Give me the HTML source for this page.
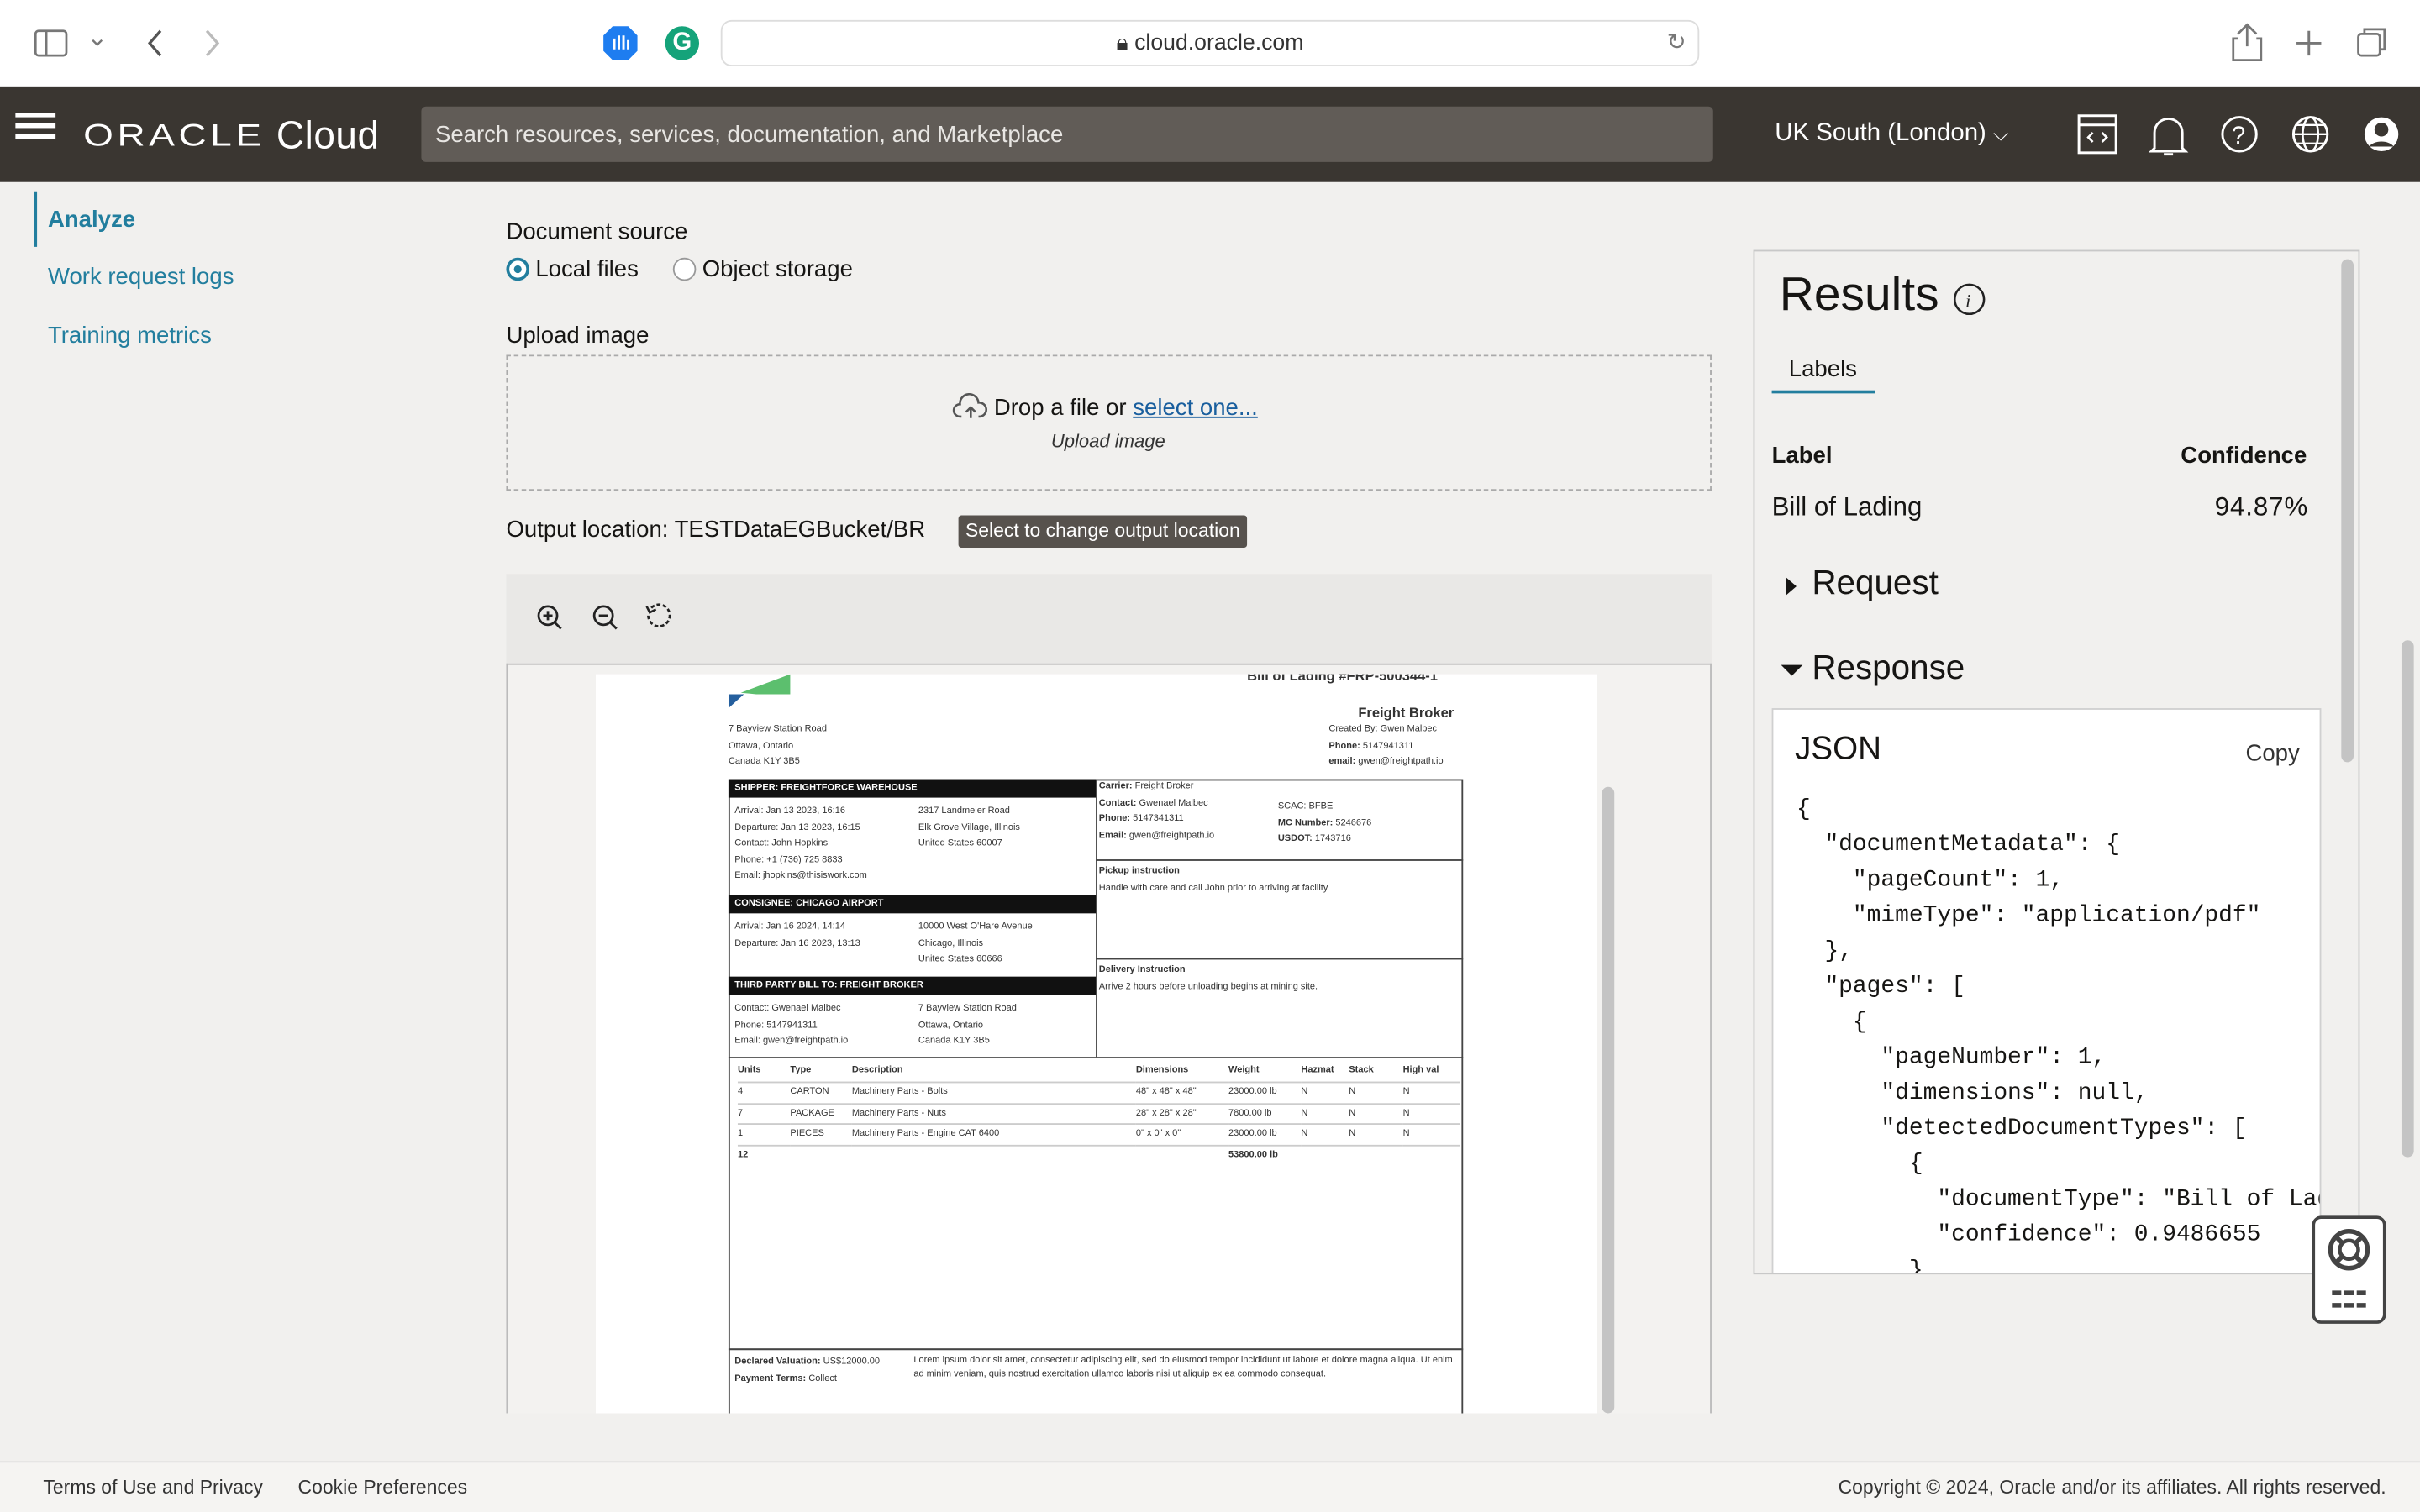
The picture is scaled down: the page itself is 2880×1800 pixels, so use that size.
<!DOCTYPE html>
<html><head><meta charset="utf-8"><style>
*{margin:0;padding:0;box-sizing:border-box}
body{width:2880px;height:1800px;overflow:hidden;background:#f1f0ee;font-family:"Liberation Sans",sans-serif}
#w{position:absolute;left:0;top:0;width:1568px;height:980px;transform:scale(1.836735);transform-origin:0 0;background:#f1f0ee;color:#161513}
.a{position:absolute}
.doc div{position:absolute}
.doc{font-size:6px;color:#333;line-height:10.5px}
.bar{background:#111;color:#fff;font-weight:bold;font-size:6px;padding-left:4px;line-height:12px}
.mono{font-family:"Liberation Mono",monospace;font-size:15.2px;line-height:23px;white-space:pre;color:#161513}
.doc table{border-collapse:collapse;font-size:6px;color:#333}
.doc td{height:13.5px;border-bottom:1px solid #ccc;padding:0}
</style></head><body><div id="w">
<div class="a" style="left:0;top:0;width:1568px;height:56px;background:#fff"></div>
<svg class="a" style="left:20px;top:18px" width="60" height="20"><rect x="3" y="2" width="20" height="16" rx="2" fill="none" stroke="#777" stroke-width="1.5"/><line x1="10" y1="2" x2="10" y2="18" stroke="#777" stroke-width="1.5"/><path d="M40 8l3 3 3-3" fill="none" stroke="#777" stroke-width="1.3"/></svg>
<svg class="a" style="left:90px;top:17px" width="60" height="22"><path d="M14 3l-7 8 7 8" fill="none" stroke="#555" stroke-width="1.8"/><path d="M44 3l7 8-7 8" fill="none" stroke="#bbb" stroke-width="1.8"/></svg>
<svg class="a" style="left:390px;top:16px" width="24" height="24"><path d="M7 1h10l6 6v10l-6 6H7l-6-6V7z" fill="#1e7df0"/><path d="M8 16V9m3 7V7m3 9V7m3 9v-6" stroke="#fff" stroke-width="1.6"/></svg>
<div class="a" style="left:431px;top:17px;width:22px;height:22px;border-radius:50%;background:#15a37a;color:#fff;font-weight:bold;font-size:16px;text-align:center;line-height:22px">G</div>
<div class="a" style="left:467px;top:13px;width:634px;height:30px;border:1px solid #ddd;border-radius:7px;background:#fff;font-size:14.5px;color:#333;text-align:center;line-height:29px">🔒︎ cloud.oracle.com</div>
<div class="a" style="left:1080px;top:18px;font-size:15px;color:#777">↻</div>
<svg class="a" style="left:1440px;top:14px" width="110" height="28"><path d="M10 8l6-6 6 6M16 2v14M10 11H7v14h18V11h-3" fill="none" stroke="#777" stroke-width="1.5"/><path d="M56 6v16M48 14h16" stroke="#777" stroke-width="1.6"/><rect x="88" y="8" width="14" height="14" rx="2" fill="none" stroke="#777" stroke-width="1.5"/><path d="M92 8V5h13v13h-3" fill="none" stroke="#777" stroke-width="1.5"/></svg>
<div class="a" style="left:0;top:56px;width:1568px;height:62px;background:#3a3631"></div>
<div class="a" style="left:10px;top:87px;width:26px;height:3px;background:#fff;box-shadow:0 -7px 0 #fff,0 7px 0 #fff;transform:translateY(-7px)"></div>
<div class="a" style="left:54px;top:74px;font-size:25px;color:#fff;white-space:nowrap"><span style="letter-spacing:2.5px;font-weight:normal;transform:scaleY(0.8);display:inline-block">ORACLE</span><span style="font-weight:normal;letter-spacing:0.3px"> Cloud</span></div>
<div class="a" style="left:273px;top:69px;width:837px;height:36px;background:#615c57;border-radius:3px;color:#e8e6e3;font-size:15px;line-height:37px;padding-left:9px">Search resources, services, documentation, and Marketplace</div>
<div class="a" style="left:1150px;top:78px;color:#fff;font-size:16px">UK South (London) <span style="font-size:13px">⌵</span></div>
<svg class="a" style="left:1345px;top:72px" width="215" height="32"><rect x="2" y="3" width="24" height="24" fill="none" stroke="#fff" stroke-width="1.6"/><line x1="2" y1="9" x2="26" y2="9" stroke="#fff" stroke-width="1.6"/><path d="M11 14l-3 3 3 3M17 14l3 3-3 3" fill="none" stroke="#fff" stroke-width="1.4"/><path d="M51 24V14a9 9 0 0 1 18 0v10l2 2H49zM57 28h6" fill="none" stroke="#fff" stroke-width="1.6"/><circle cx="106" cy="15" r="11" fill="none" stroke="#fff" stroke-width="1.6"/><text x="101" y="21" fill="#fff" font-size="16" font-family="Liberation Sans">?</text><circle cx="152" cy="15" r="11" fill="none" stroke="#fff" stroke-width="1.6"/><ellipse cx="152" cy="15" rx="5" ry="11" fill="none" stroke="#fff" stroke-width="1.4"/><path d="M141 15h22M143 9h18M143 21h18" stroke="#fff" stroke-width="1.3"/><circle cx="198" cy="15" r="11" fill="#fff"/><circle cx="198" cy="12" r="4.5" fill="#3a3631"/><path d="M190 23a9 6 0 0 1 16 0" fill="#3a3631"/></svg>
<div class="a" style="left:22px;top:124px;width:2px;height:36px;background:#227e9e"></div>
<div class="a" style="left:31px;top:134px;font-size:15px;color:#227e9e;font-weight:bold">Analyze</div>
<div class="a" style="left:31px;top:171px;font-size:15px;color:#227e9e">Work request logs</div>
<div class="a" style="left:31px;top:209px;font-size:15px;color:#227e9e">Training metrics</div>
<div class="a" style="left:328px;top:142px;font-size:15px">Document source</div>
<div class="a" style="left:328px;top:167px;width:15px;height:15px;border-radius:50%;background:#227e9e"></div>
<div class="a" style="left:330px;top:169px;width:11px;height:11px;border-radius:50%;border:3px solid #fff;background:#227e9e"></div>
<div class="a" style="left:347px;top:166px;font-size:15px">Local files</div>
<div class="a" style="left:436px;top:167px;width:15px;height:15px;border-radius:50%;border:1px solid #999;background:#fff"></div>
<div class="a" style="left:455px;top:166px;font-size:15px">Object storage</div>
<div class="a" style="left:328px;top:209px;font-size:15px">Upload image</div>
<div class="a" style="left:328px;top:230px;width:781px;height:88px;border:1px dashed #aaa"></div>
<svg class="a" style="left:617px;top:254px" width="24" height="20"><path d="M6 16H5a4 4 0 0 1 0-8 6 6 0 0 1 12-1 4.5 4.5 0 0 1 1 9h-1M12 17V10M9 13l3-3 3 3" fill="none" stroke="#555" stroke-width="1.4"/></svg>
<div class="a" style="left:644px;top:256px;font-size:15px">Drop a file or <span style="color:#1a5f9e;text-decoration:underline">select one...</span></div>
<div class="a" style="left:681px;top:279px;font-size:12px;font-style:italic;color:#333">Upload image</div>
<div class="a" style="left:328px;top:335px;font-size:15px">Output location: TESTDataEGBucket/BR</div>
<div class="a" style="left:621px;top:334px;width:187px;height:21px;background:#57524d;color:#fff;font-size:12.5px;line-height:21px;text-align:center;border-radius:2px">Select to change output location</div>
<div class="a" style="left:328px;top:372px;width:781px;height:58px;background:#e9e8e6"></div>
<svg class="a" style="left:346px;top:390px" width="95" height="20"><circle cx="9" cy="9" r="6" fill="none" stroke="#222" stroke-width="1.5"/><path d="M13.5 13.5l4 4M6 9h6M9 6v6" stroke="#222" stroke-width="1.5"/><circle cx="45" cy="9" r="6" fill="none" stroke="#222" stroke-width="1.5"/><path d="M49.5 13.5l4 4M42 9h6" stroke="#222" stroke-width="1.5"/><path d="M76 4a7 7 0 1 1-2 5" fill="none" stroke="#222" stroke-width="1.5" stroke-dasharray="2.5 1.5"/><path d="M73 3l2 4 4-2" fill="none" stroke="#222" stroke-width="1.4"/></svg>
<div class="a" style="left:328px;top:430px;width:781px;height:486px;border:1px solid #bbb;border-bottom:none;background:#f3f2f0"></div>
<div class="a" style="left:1038px;top:510px;width:8px;height:406px;border-radius:4px;background:#c4c4c4"></div>
<div class="a doc" style="left:386px;top:437px;width:649px;height:479px;background:#fff;overflow:hidden">
<svg style="position:absolute;left:86px;top:0" width="42" height="22"><polygon points="8,12 40,0 40,13 18,13" fill="#5cbf6e"/><polygon points="0,13 10,13 0,22" fill="#255f9e"/></svg>
<div style="left:422px;top:-4px;font-size:9px;font-weight:bold">Bill of Lading #FRP-500344-1</div>
<div style="left:494px;top:20px;font-size:9px;font-weight:bold">Freight Broker</div>
<div style="left:475px;top:31px;text-align:left">Created By: Gwen Malbec<br><b>Phone:</b> 5147941311<br><b>email:</b> gwen@freightpath.io</div>
<div style="left:86px;top:31px">7 Bayview Station Road<br>Ottawa, Ontario<br>Canada K1Y 3B5</div>
<div style="left:86px;top:68px;width:476px;height:370px;border:1px solid #444"></div>
<div style="left:324px;top:68px;width:238px;height:180px;border-left:1px solid #444"></div>
<div style="left:86px;top:68px;width:238px" class="bar">SHIPPER: FREIGHTFORCE WAREHOUSE</div>
<div style="left:90px;top:84px">Arrival: Jan 13 2023, 16:16<br>Departure: Jan 13 2023, 16:15<br>Contact: John Hopkins<br>Phone: +1 (736) 725 8833<br>Email: jhopkins@thisiswork.com</div>
<div style="left:209px;top:84px">2317 Landmeier Road<br>Elk Grove Village, Illinois<br>United States 60007</div>
<div style="left:86px;top:143px;width:238px" class="bar">CONSIGNEE: CHICAGO AIRPORT</div>
<div style="left:90px;top:159px">Arrival: Jan 16 2024, 14:14<br>Departure: Jan 16 2023, 13:13</div>
<div style="left:209px;top:159px">10000 West O'Hare Avenue<br>Chicago, Illinois<br>United States 60666</div>
<div style="left:86px;top:196px;width:238px" class="bar">THIRD PARTY BILL TO: FREIGHT BROKER</div>
<div style="left:90px;top:212px">Contact: Gwenael Malbec<br>Phone: 5147941311<br>Email: gwen@freightpath.io</div>
<div style="left:209px;top:212px">7 Bayview Station Road<br>Ottawa, Ontario<br>Canada K1Y 3B5</div>
<div style="left:326px;top:68px"><b>Carrier:</b> Freight Broker<br><b>Contact:</b> Gwenael Malbec<br><b>Phone:</b> 5147341311<br><b>Email:</b> gwen@freightpath.io</div>
<div style="left:442px;top:81px">SCAC: BFBE<br><b>MC Number:</b> 5246676<br><b>USDOT:</b> 1743716</div>
<div style="left:324px;top:120px;width:238px;border-top:1px solid #444;padding:2px"><b>Pickup instruction</b><br>Handle with care and call John prior to arriving at facility</div>
<div style="left:324px;top:184px;width:238px;border-top:1px solid #444;padding:2px"><b>Delivery Instruction</b><br>Arrive 2 hours before unloading begins at mining site.</div>
<div style="left:86px;top:248px;width:476px;border-top:1px solid #444"></div>
<div style="left:92px;top:251px">
<table style="width:468px"><colgroup><col style="width:34px"><col style="width:40px"><col style="width:184px"><col style="width:60px"><col style="width:47px"><col style="width:31px"><col style="width:35px"><col></colgroup>
<tr style="font-weight:bold"><td>Units</td><td>Type</td><td>Description</td><td>Dimensions</td><td>Weight</td><td>Hazmat</td><td>Stack</td><td>High val</td></tr>
<tr><td>4</td><td>CARTON</td><td>Machinery Parts - Bolts</td><td>48" x 48" x 48"</td><td>23000.00 lb</td><td>N</td><td>N</td><td>N</td></tr>
<tr><td>7</td><td>PACKAGE</td><td>Machinery Parts - Nuts</td><td>28" x 28" x 28"</td><td>7800.00 lb</td><td>N</td><td>N</td><td>N</td></tr>
<tr><td>1</td><td>PIECES</td><td>Machinery Parts - Engine CAT 6400</td><td>0" x 0" x 0"</td><td>23000.00 lb</td><td>N</td><td>N</td><td>N</td></tr>
<tr style="font-weight:bold"><td style="border:none">12</td><td style="border:none"></td><td style="border:none"></td><td style="border:none"></td><td style="border:none">53800.00 lb</td><td style="border:none"></td><td style="border:none"></td><td style="border:none"></td></tr>
</table></div>
<div style="left:86px;top:437px;width:476px;height:50px;border:1px solid #444;padding:3px"><b>Declared Valuation:</b> US$12000.00<br><b>Payment Terms:</b> Collect</div>
<div style="left:206px;top:441px;width:352px;line-height:9px">Lorem ipsum dolor sit amet, consectetur adipiscing elit, sed do eiusmod tempor incididunt ut labore et dolore magna aliqua. Ut enim ad minim veniam, quis nostrud exercitation ullamco laboris nisi ut aliquip ex ea commodo consequat.</div>
</div>
<div class="a" style="left:1136px;top:162px;width:393px;height:664px;border:1px solid #c8c8c8;overflow:hidden">
<div class="a" style="left:16px;top:10px;font-size:31px">Results</div>
<svg class="a" style="left:128px;top:20px" width="22" height="22"><circle cx="11" cy="11" r="9.5" fill="none" stroke="#222" stroke-width="1.4"/><text x="8.5" y="16" font-size="12" font-style="italic" font-family="Liberation Serif" fill="#222">i</text></svg>
<div class="a" style="left:22px;top:68px;font-size:15px">Labels</div>
<div class="a" style="left:11px;top:90px;width:67px;height:2px;background:#227e9e"></div>
<div class="a" style="left:11px;top:124px;font-size:15px;font-weight:bold">Label</div>
<div class="a" style="left:276px;top:124px;font-size:15px;font-weight:bold">Confidence</div>
<div class="a" style="left:11px;top:156px;font-size:17px">Bill of Lading</div>
<div class="a" style="left:298px;top:156px;font-size:17px;letter-spacing:0.5px">94.87%</div>
<div class="a" style="left:20px;top:211px;width:0;height:0;border-top:6px solid transparent;border-bottom:6px solid transparent;border-left:7px solid #161513"></div>
<div class="a" style="left:37px;top:202px;font-size:22px">Request</div>
<div class="a" style="left:17px;top:268px;width:0;height:0;border-left:7px solid transparent;border-right:7px solid transparent;border-top:7px solid #161513"></div>
<div class="a" style="left:37px;top:257px;font-size:22px">Response</div>
<div class="a" style="left:11px;top:296px;width:356px;height:380px;background:#fff;border:1px solid #d0d0d0;overflow:hidden">
<div class="a" style="left:14px;top:14px;font-size:21px">JSON</div>
<div class="a" style="left:306px;top:20px;font-size:15px;color:#333">Copy</div>
<div class="a mono" style="left:15px;top:53px">{
  "documentMetadata": {
    "pageCount": 1,
    "mimeType": "application/pdf"
  },
  "pages": [
    {
      "pageNumber": 1,
      "dimensions": null,
      "detectedDocumentTypes": [
        {
          "documentType": "Bill of Lading",
          "confidence": 0.9486655
        }</div>
</div>
<div class="a" style="left:380px;top:5px;width:8px;height:326px;border-radius:4px;background:#c4c4c4"></div>
</div>
<div class="a" style="left:1556px;top:415px;width:8px;height:335px;border-radius:4px;background:#c4c4c4"></div>
<div class="a" style="left:1498px;top:788px;width:48px;height:70px;border:2px solid #444;border-radius:6px;background:#fff"></div>
<svg class="a" style="left:1505px;top:794px" width="36" height="58"><circle cx="17" cy="16" r="12" fill="none" stroke="#444" stroke-width="3"/><circle cx="17" cy="16" r="6" fill="none" stroke="#444" stroke-width="2.5"/><path d="M8 7l5 5M26 7l-5 5M8 25l5-5M26 25l-5-5" stroke="#444" stroke-width="3"/><path d="M6 44h6M14 44h6M22 44h6M6 52h6M14 52h6M22 52h6" stroke="#444" stroke-width="3"/></svg>
<div class="a" style="left:0;top:947px;width:1568px;height:33px;background:#f5f4f2;border-top:1px solid #ddd"></div>
<div class="a" style="left:28px;top:957px;font-size:12.5px;color:#333">Terms of Use and Privacy</div>
<div class="a" style="left:193px;top:957px;font-size:12.5px;color:#333">Cookie Preferences</div>
<div class="a" style="right:22px;top:957px;font-size:12.5px;color:#333;white-space:nowrap">Copyright © 2024, Oracle and/or its affiliates. All rights reserved.</div>
</div></body></html>
